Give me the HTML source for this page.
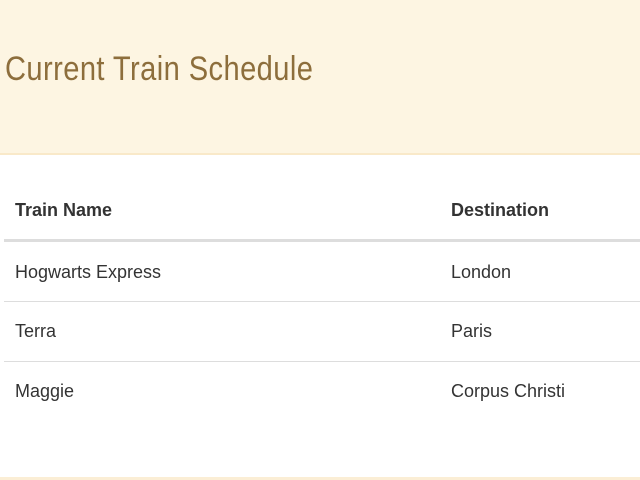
<!DOCTYPE html>
<html><head><style>
body{margin:0;width:640px;height:480px;overflow:hidden;background:#fff;font-family:"Liberation Sans",sans-serif;position:relative}
.hd{position:absolute;left:0;top:0;width:640px;height:153px;background:#fdf5e2;border-bottom:2px solid #f9e9c9}
.t{position:absolute;left:5px;top:50px;font-size:34px;color:#8d6e3c;white-space:nowrap;transform:scaleX(0.855);transform-origin:left top;letter-spacing:0.5px}
.tx{position:absolute;font-size:18px;color:#333;white-space:nowrap;line-height:20px}
.b{font-weight:bold}
.ln{position:absolute;left:4px;width:636px;background:#ddd}
.ft{position:absolute;left:0;top:477px;width:640px;height:3px;background:#fbeed5}
</style></head><body>
<div class="hd"><div class="t">Current Train Schedule</div></div>
<div class="tx b" style="left:15px;top:200px">Train Name</div>
<div class="tx b" style="left:451px;top:200px">Destination</div>
<div class="ln" style="top:239px;height:3px"></div>
<div class="tx" style="left:15px;top:262px">Hogwarts Express</div>
<div class="tx" style="left:451px;top:262px">London</div>
<div class="ln" style="top:301px;height:1px"></div>
<div class="tx" style="left:15px;top:321px">Terra</div>
<div class="tx" style="left:451px;top:321px">Paris</div>
<div class="ln" style="top:361px;height:1px"></div>
<div class="tx" style="left:15px;top:381px">Maggie</div>
<div class="tx" style="left:451px;top:381px">Corpus Christi</div>
<div class="ft"></div>
</body></html>
